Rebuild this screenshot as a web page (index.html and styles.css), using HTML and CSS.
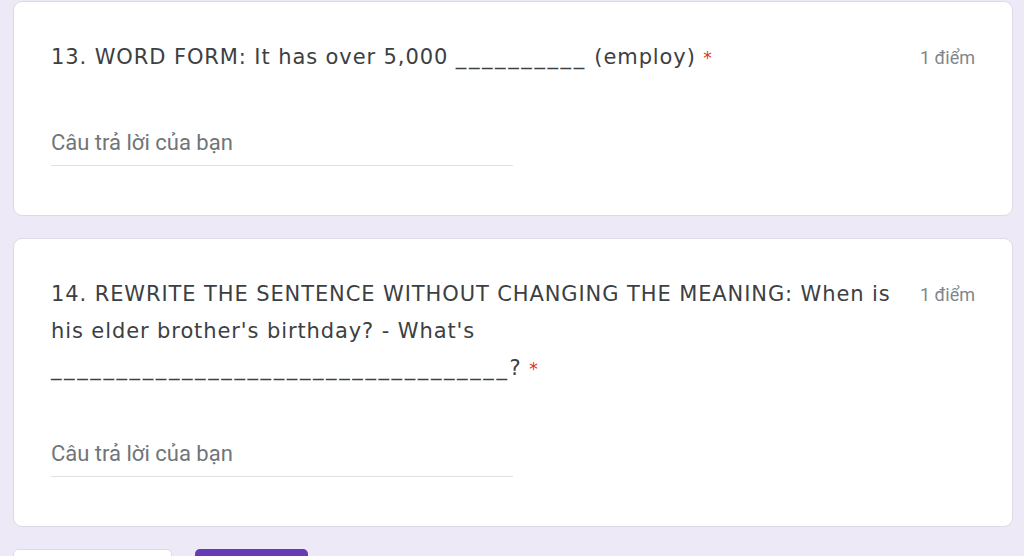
FILE: index.html
```html
<!DOCTYPE html>
<html lang="vi">
<head>
  <meta charset="UTF-8" />
  <meta name="viewport" content="width=device-width, initial-scale=1.0">
  <title>Bài kiểm tra</title>
  <link rel="stylesheet" href="styles.css">
</head>
<body>
  <div class="form">

    <!-- Question 13 -->
    <div class="card">
      <div class="question-head">
        <div class="question-title">13. WORD FORM: It has over 5,000 <span class="blank">__________</span> (employ) <span class="required">*</span></div>
        <div class="points">1 điểm</div>
      </div>
      <div class="answer">Câu trả lời của bạn</div>
    </div>

    <!-- Question 14 -->
    <div class="card">
      <div class="question-head">
        <div class="question-title">14. REWRITE THE SENTENCE WITHOUT CHANGING THE MEANING: When is his elder brother's birthday? - What's <span class="blank">___________________________________</span>? <span class="required">*</span></div>
        <div class="points">1 điểm</div>
      </div>
      <div class="answer">Câu trả lời của bạn</div>
    </div>

    <div class="button-row">
      <button class="btn-back"></button>
      <button class="btn-submit"></button>
    </div>
  </div>
</body>
</html>
```

FILE: styles.css
```css
body {
  margin: 0;
  background-color: #ede9f6;
  font-family: 'DejaVu Sans', sans-serif;
  color: #202124;
  overflow: hidden;
}
.form {
  padding: 1px 11px 0 13px;
  display: flex;
  flex-direction: column;
  gap: 22px;
}
.card {
  background: #fff;
  border: 1px solid #dcdae4;
  border-radius: 9px;
  padding: 37px 37px 49px;
}
.question-head {
  display: flex;
  align-items: flex-start;
}
.question-title {
  max-width: 870px;
  font-size: 21px;
  line-height: 37px;
  letter-spacing: 0.9px;
  color: #3c4043;
}
.blank {
  letter-spacing: 2.6px;
}
.required {
  color: #d93025;
  font-size: 17px;
}
.points {
  margin-left: auto;
  padding-left: 16px;
  font-family: Roboto, sans-serif;
  font-size: 18px;
  line-height: 37px;
  color: #80868b;
  white-space: nowrap;
}
.answer {
  width: 462px;
  margin-top: 52px;
  padding-bottom: 8px;
  border-bottom: 1px solid #e0e0e0;
  font-family: Roboto, sans-serif;
  font-size: 22px;
  line-height: 28px;
  color: #70757a;
}
.button-row {
  display: flex;
  gap: 23px;
}
.btn-back, .btn-submit {
  height: 36px;
  border: none;
  border-radius: 5px;
  cursor: pointer;
}
.btn-back {
  width: 159px;
  background: #fff;
  border: 1px solid #dcdae4;
}
.btn-submit {
  width: 113px;
  background: #673ab7;
}
```
